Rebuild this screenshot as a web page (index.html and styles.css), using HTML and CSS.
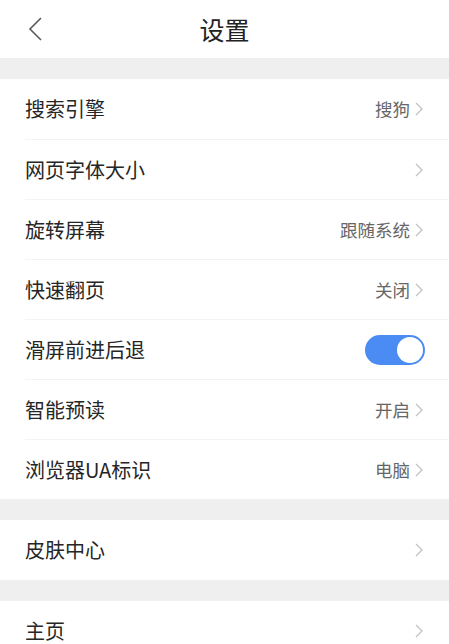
FILE: index.html
```html
<!DOCTYPE html>
<html lang="zh">
<head>
<meta charset="utf-8">
<title>设置</title>
<link rel="stylesheet" href="styles.css">
</head>
<body>
<header class="topbar">
  <span class="back">
    <svg width="16" height="24" viewBox="0 0 16 24"><path d="M14 1 L3 12 L14 23" fill="none" stroke="#5a5a5a" stroke-width="1.6"/></svg>
  </span>
  <h1 class="title">设置</h1>
</header>
<div class="gap"></div>
<section class="group">
  <div class="row"><span class="label">搜索引擎</span><span class="value">搜狗<svg class="chev" viewBox="0 0 8 14"><path d="M1 1 L7 7 L1 13" fill="none" stroke="#c2c2c2" stroke-width="1.3"/></svg></span></div>
  <div class="row"><span class="label">网页字体大小</span><span class="value"><svg class="chev" viewBox="0 0 8 14"><path d="M1 1 L7 7 L1 13" fill="none" stroke="#c2c2c2" stroke-width="1.3"/></svg></span></div>
  <div class="row"><span class="label">旋转屏幕</span><span class="value">跟随系统<svg class="chev" viewBox="0 0 8 14"><path d="M1 1 L7 7 L1 13" fill="none" stroke="#c2c2c2" stroke-width="1.3"/></svg></span></div>
  <div class="row"><span class="label">快速翻页</span><span class="value">关闭<svg class="chev" viewBox="0 0 8 14"><path d="M1 1 L7 7 L1 13" fill="none" stroke="#c2c2c2" stroke-width="1.3"/></svg></span></div>
  <div class="row"><span class="label">滑屏前进后退</span><span class="toggle on"><span class="knob"></span></span></div>
  <div class="row"><span class="label">智能预读</span><span class="value">开启<svg class="chev" viewBox="0 0 8 14"><path d="M1 1 L7 7 L1 13" fill="none" stroke="#c2c2c2" stroke-width="1.3"/></svg></span></div>
  <div class="row"><span class="label">浏览器UA标识</span><span class="value">电脑<svg class="chev" viewBox="0 0 8 14"><path d="M1 1 L7 7 L1 13" fill="none" stroke="#c2c2c2" stroke-width="1.3"/></svg></span></div>
</section>
<div class="gap"></div>
<section class="group">
  <div class="row"><span class="label">皮肤中心</span><span class="value"><svg class="chev" viewBox="0 0 8 14"><path d="M1 1 L7 7 L1 13" fill="none" stroke="#c2c2c2" stroke-width="1.3"/></svg></span></div>
</section>
<div class="gap"></div>
<section class="group">
  <div class="row"><span class="label">主页</span><span class="value"><svg class="chev" viewBox="0 0 8 14"><path d="M1 1 L7 7 L1 13" fill="none" stroke="#c2c2c2" stroke-width="1.3"/></svg></span></div>
</section>
</body>
</html>
```
FILE: styles.css
```css
html, body {
  margin: 0;
  padding: 0;
  background: #ffffff;
  font-family: "Noto Sans CJK SC", "Noto Sans", sans-serif;
  overflow: hidden;
}
.topbar {
  height: 58px;
  display: flex;
  align-items: center;
  justify-content: center;
  position: relative;
  background: #fff;
}
.back {
  position: absolute;
  left: 27px;
  top: 17px;
  width: 16px;
  height: 24px;
  display: block;
}
.back svg { display: block; }
.title {
  margin: 0;
  font-size: 25px;
  font-weight: 400;
  color: #222;
  line-height: 1;
}
.gap {
  height: 21px;
  background: #efefef;
}
.group { background: #fff; }
.row {
  height: 60px;
  display: flex;
  align-items: center;
  justify-content: space-between;
  margin-left: 25px;
  padding-right: 26px;
  border-top: 1px solid #f3f3f3;
  box-sizing: border-box;
}
.row:first-child { border-top: none; }
.label {
  font-size: 20px;
  color: #262626;
  line-height: 1;
}
.value {
  display: flex;
  align-items: center;
  font-size: 17.5px;
  color: #666;
  line-height: 1;
}
.chev {
  display: block;
  width: 8px;
  height: 14px;
  margin-left: 5px;
}
.toggle {
  width: 60px;
  height: 30px;
  border-radius: 15px;
  background: #4a8cf4;
  display: flex;
  align-items: center;
  justify-content: flex-end;
  padding: 0 2px;
  box-sizing: border-box;
  margin-right: -2px;
}
.knob {
  width: 26px;
  height: 26px;
  border-radius: 50%;
  background: #fff;
}
```
